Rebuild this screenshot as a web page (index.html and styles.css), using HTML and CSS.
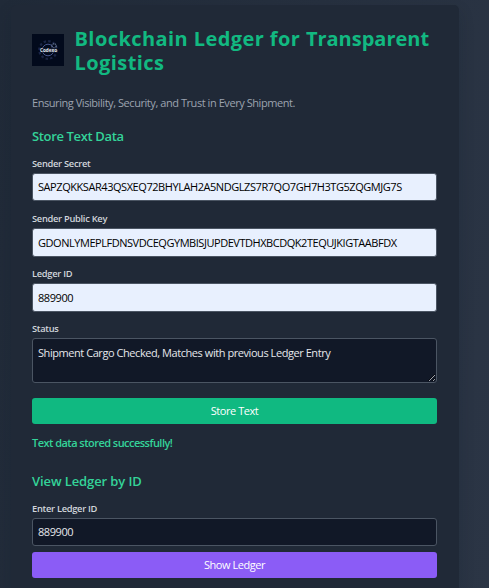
FILE: index.html
```html
<!DOCTYPE html>
<html lang="en">
<head>
<meta charset="utf-8">
<title>Blockchain Ledger for Transparent Logistics</title>
<link rel="stylesheet" href="styles.css">
</head>
<body>
<main class="card">
  <header class="header">
    <svg class="logo" viewBox="0 0 32 32" role="img" aria-label="Codexo">
      <rect width="32" height="32" fill="#020a1c"/>
      <g fill="none" stroke="#2b3763">
        <circle cx="16" cy="16" r="8.8" stroke-width="2.2" stroke-dasharray="2.4 2.2" opacity=".6"/>
        <circle cx="16" cy="16" r="5.8" stroke="#46568e" stroke-width="1"/>
        <circle cx="22" cy="12" r="2.2" stroke="#596782" stroke-width="1.5" stroke-dasharray="1 .7"/>
      </g>
      <rect x="8" y="14" width="17" height="4.5" fill="#11192d"/>
      <text class="logo-text" x="8" y="18" textLength="17" lengthAdjust="spacingAndGlyphs">Codexo</text>
    </svg>
    <h1 class="title">Blockchain Ledger for <span class="title-narrow">Transparent</span> Logistics</h1>
  </header>
  <p class="tagline">Ensuring Visibility, Security, and Trust in Every Shipment.</p>
  <section>
    <h2 class="section-title tight">Store Text Data</h2>
    <div class="field">
      <label class="label" for="secret">Sender Secret</label>
      <input class="input filled secret" id="secret" value="SAPZQKKSAR43QSXEQ72BHYLAH2A5NDGLZS7R7QO7GH7H3TG5ZQGMJG7S">
    </div>
    <div class="field">
      <label class="label" for="key">Sender Public Key</label>
      <input class="input filled key" id="key" value="GDONLYMEPLFDNSVDCEQGYMBISJUPDEVTDHXBCDQK2TEQUJKIGTAABFDX">
    </div>
    <div class="field">
      <label class="label" for="ledger">Ledger ID</label>
      <input class="input filled" id="ledger" value="889900">
    </div>
    <div class="field status-field">
      <label class="label" for="status">Status</label>
      <textarea class="input area" id="status">Shipment Cargo Checked, Matches with previous Ledger Entry</textarea>
    </div>
    <button class="button store">Store Text</button>
    <p class="message">Text data stored successfully!</p>
  </section>
  <section class="view">
    <h2 class="section-title">View Ledger by ID</h2>
    <div class="field lookup">
      <label class="label" for="lookup">Enter Ledger ID</label>
      <input class="input" id="lookup" value="889900">
    </div>
    <button class="button show">Show Ledger</button>
  </section>
</main>
</body>
</html>
```
FILE: styles.css
```css
* { box-sizing: border-box; }
html { height: 100%; overflow: hidden; }
body {
  margin: 0;
  height: 588px;
  padding: 5px 30px 0 11px;
  overflow: hidden;
  background: linear-gradient(100deg, #202a38, #2b3545);
  font-family: "Open Sans", "Noto Sans", sans-serif;
  font-size: 11px;
}
h1, h2, p { margin: 0; }
.card {
  width: 448px;
  height: 583px;
  padding: 22px 22px 0 21px;
  border-radius: 5px 5px 0 0;
  background: #202937;
  box-shadow: 0 7px 16px rgba(15, 23, 35, .16);
}
.header { display: flex; align-items: center; gap: 10.5px; height: 48px; }
.logo { flex: none; width: 32px; height: 32px; margin-top: -2px; }
.logo-text { font: bold 5px "Open Sans", sans-serif; fill: #e3e7ef; }
.title {
  color: #12b981;
  font-size: 20px;
  line-height: 24px;
  font-weight: 700;
  letter-spacing: .42px;
}
.title-narrow { letter-spacing: 0; }
.tagline { margin-top: 20px; line-height: 16px; color: #9ca3af; letter-spacing: -.44px; }
.section-title {
  margin-top: 16px;
  margin-bottom: 11px;
  color: #34d399;
  font-size: 13px;
  line-height: 19px;
  font-weight: 600;
  letter-spacing: -.1px;
}
.tight { letter-spacing: -.35px; }
.field { height: 55px; }
.label {
  display: block;
  height: 16px;
  line-height: 13px;
  color: #d1d5db;
  font-size: 9.3px;
  font-weight: 600;
  letter-spacing: -.28px;
}
.input {
  display: block;
  width: 405px;
  height: 28px;
  padding: 0 5px 1px;
  border: 1px solid #4b5563;
  border-radius: 3px;
  outline: none;
  background: #111827;
  color: #e5e7eb;
  font: inherit;
  letter-spacing: -.44px;
}
.filled { background: #e8f0fe; color: #000; height: 29px; }
.secret { height: 28px; }
.key { letter-spacing: -.46px; }
.area { height: 45px; padding-top: 6px; line-height: 16px; resize: vertical; }
.status-field { height: 76px; }
.button {
  display: block;
  width: 405px;
  height: 26px;
  padding: 0 0 1px;
  border: 0;
  border-radius: 3px;
  color: #fff;
  font: inherit;
  letter-spacing: -.45px;
}
.store { background: #10b981; }
.show { background: #8b5cf6; }
.message { margin-top: 11px; line-height: 16px; color: #34d399; font-weight: 600; letter-spacing: -.53px; }
.view { padding-top: 5px; }
.lookup { height: 50px; }
```
